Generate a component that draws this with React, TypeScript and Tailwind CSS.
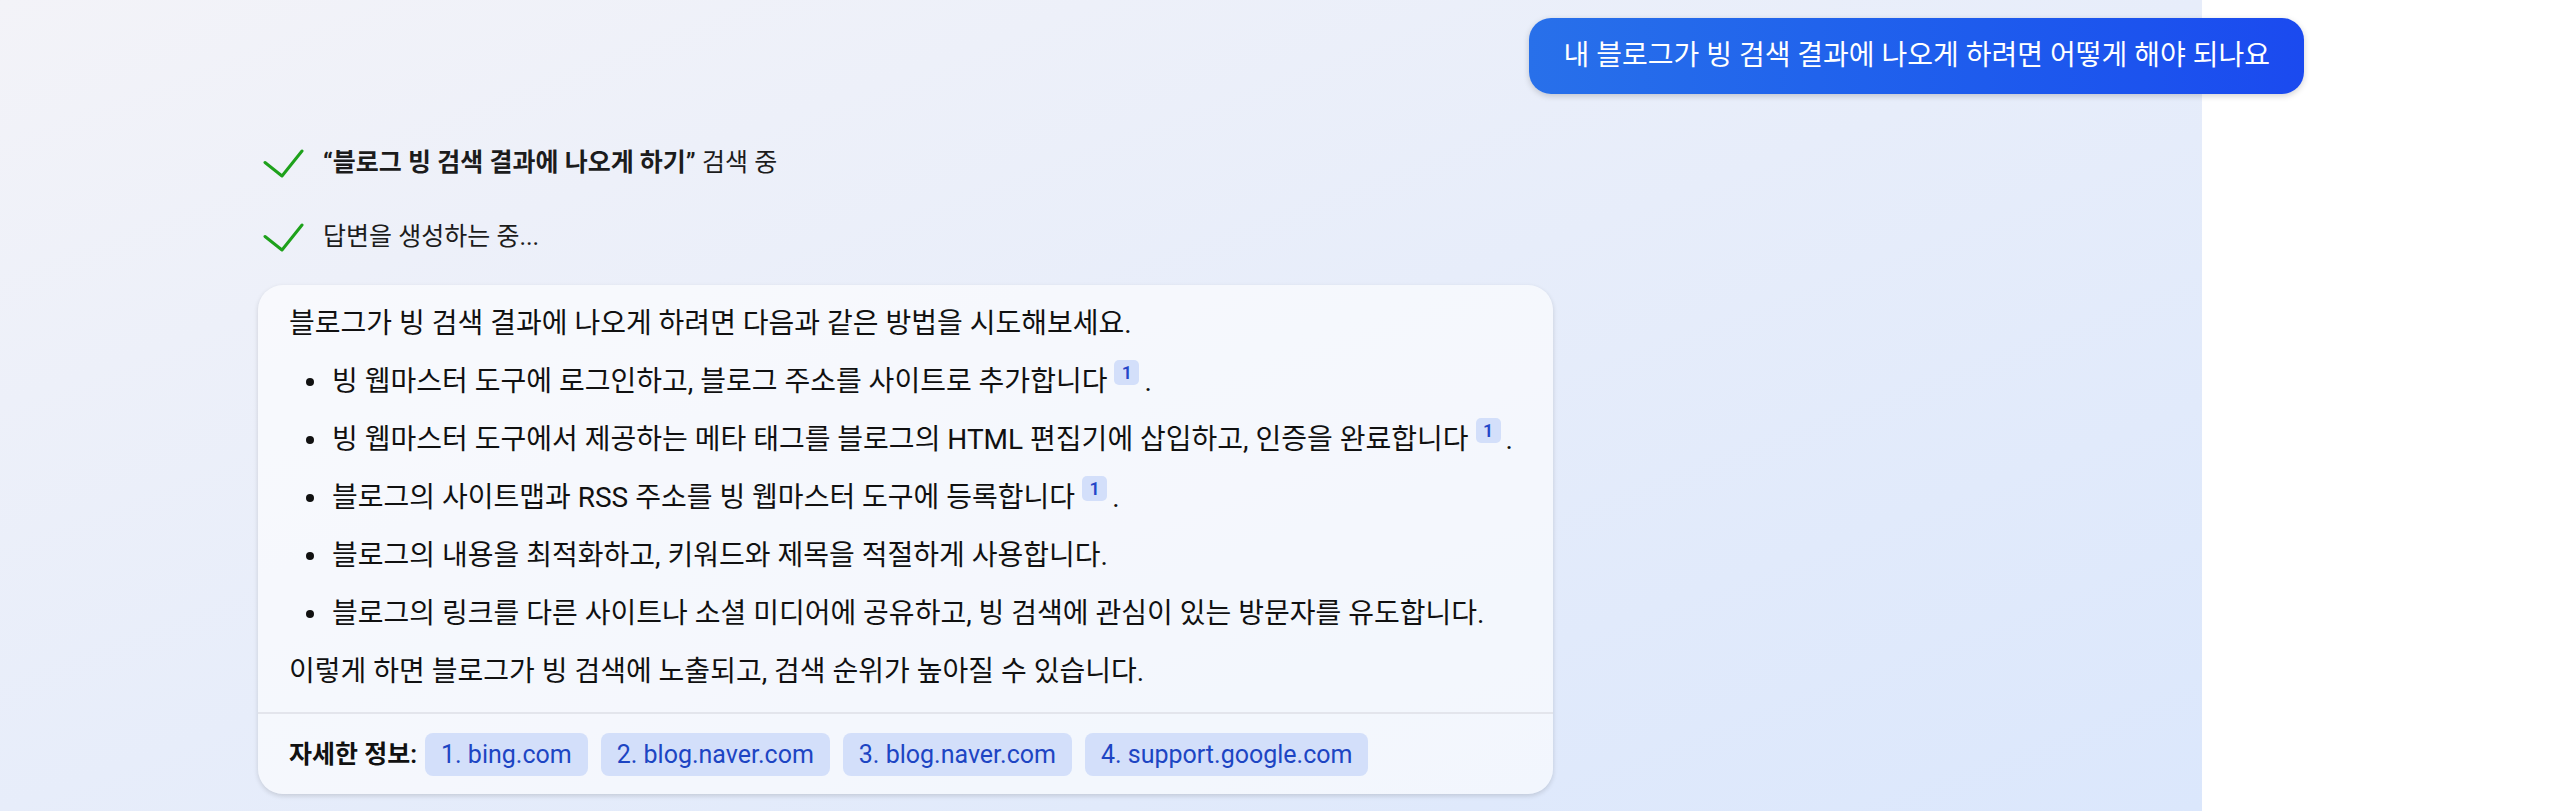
import React from 'react';

const FONT = "font-['Roboto','Noto_Sans_CJK_KR',sans-serif]";

const Ref: React.FC = () => (
  <span className="inline-flex align-top -mt-[3px] ml-[7px] w-[25px] h-[25px] items-center justify-center rounded-[5px] bg-[#d3dffa] text-[18px] leading-none font-semibold text-[#2346c8]">
    1
  </span>
);

const Check: React.FC = () => (
  <svg width="41" height="29" viewBox="0 0 41 29" fill="none" className="shrink-0">
    <path d="M2 13.5L19 27L39 2" stroke="#1ea11b" strokeWidth="3" strokeLinecap="round" strokeLinejoin="round" />
  </svg>
);

const Bullet: React.FC<{ children: React.ReactNode }> = ({ children }) => (
  <li className="flex items-center pl-[17px]">
    <span className="w-[8px] h-[8px] rounded-full bg-[#111111] shrink-0" />
    <span className="ml-[18px]">{children}</span>
  </li>
);

const sources = ['1. bing.com', '2. blog.naver.com', '3. blog.naver.com', '4. support.google.com'];

const App: React.FC = () => {
  return (
    <div className={`min-h-[811px] bg-white ${FONT}`}>
      <main className="w-[2202px] h-[811px] bg-linear-to-br from-[#f3f3f8] to-[#dbe7fc]">
        <div className="ml-[258px] w-[2046px] pt-[18px] flex flex-col">
          {/* user message */}
          <div className="self-end rounded-[22px] bg-linear-to-r from-[#2870ea] to-[#1b4aef] px-[34px] py-[19px] text-[28px] leading-[38px] text-white shadow-[0_2px_6px_rgba(0,0,0,0.18)] whitespace-nowrap">
            내 블로그가 빙 검색 결과에 나오게 하려면 어떻게 해야 되나요
          </div>

          {/* progress */}
          <div className="mt-[50px] flex items-center gap-[19px] pl-[5px] text-[25px] leading-[38px] text-[#1c1c1c]">
            <Check />
            <span>
              <b className="font-semibold">“블로그 빙 검색 결과에 나오게 하기”</b> 검색 중
            </span>
          </div>
          <div className="mt-[36px] flex items-center gap-[19px] pl-[5px] text-[25px] leading-[38px] text-[#1c1c1c]">
            <Check />
            <span>답변을 생성하는 중...</span>
          </div>

          {/* answer card */}
          <div className="mt-[29px] w-[1295px] rounded-[25px] bg-white/60 shadow-[0_2px_5px_rgba(0,0,0,0.14)]">
            <div className="px-[31px] pt-[20px] pb-[21px] flex flex-col gap-[20px] text-[28px] leading-[38px] text-[#111111] whitespace-nowrap">
              <p>블로그가 빙 검색 결과에 나오게 하려면 다음과 같은 방법을 시도해보세요.</p>
              <ul className="flex flex-col gap-[20px]">
                <Bullet>
                  빙 웹마스터 도구에 로그인하고, 블로그 주소를 사이트로 추가합니다<Ref />
                  <span className="ml-[5px]">.</span>
                </Bullet>
                <Bullet>
                  빙 웹마스터 도구에서 제공하는 메타 태그를 블로그의 HTML 편집기에 삽입하고, 인증을 완료합니다<Ref />
                  <span className="ml-[5px]">.</span>
                </Bullet>
                <Bullet>
                  블로그의 사이트맵과 RSS 주소를 빙 웹마스터 도구에 등록합니다<Ref />
                  <span className="ml-[5px]">.</span>
                </Bullet>
                <Bullet>블로그의 내용을 최적화하고, 키워드와 제목을 적절하게 사용합니다.</Bullet>
                <Bullet>블로그의 링크를 다른 사이트나 소셜 미디어에 공유하고, 빙 검색에 관심이 있는 방문자를 유도합니다.</Bullet>
              </ul>
              <p>이렇게 하면 블로그가 빙 검색에 노출되고, 검색 순위가 높아질 수 있습니다.</p>
            </div>

            <div className="border-t-2 border-[#e3e5ec] px-[31px] pt-[19px] pb-[18px] flex items-center">
              <span className="text-[25px] font-semibold text-[#111111] mr-[8px]">자세한 정보:</span>
              <div className="flex gap-[13px]">
                {sources.map((s) => (
                  <a
                    key={s}
                    href="#"
                    className="h-[43px] px-[16px] flex items-center rounded-[8px] bg-[#d3dffa] text-[25px] text-[#1d45c3]"
                  >
                    {s}
                  </a>
                ))}
              </div>
            </div>
          </div>
        </div>
      </main>
    </div>
  );
};

export default App;
